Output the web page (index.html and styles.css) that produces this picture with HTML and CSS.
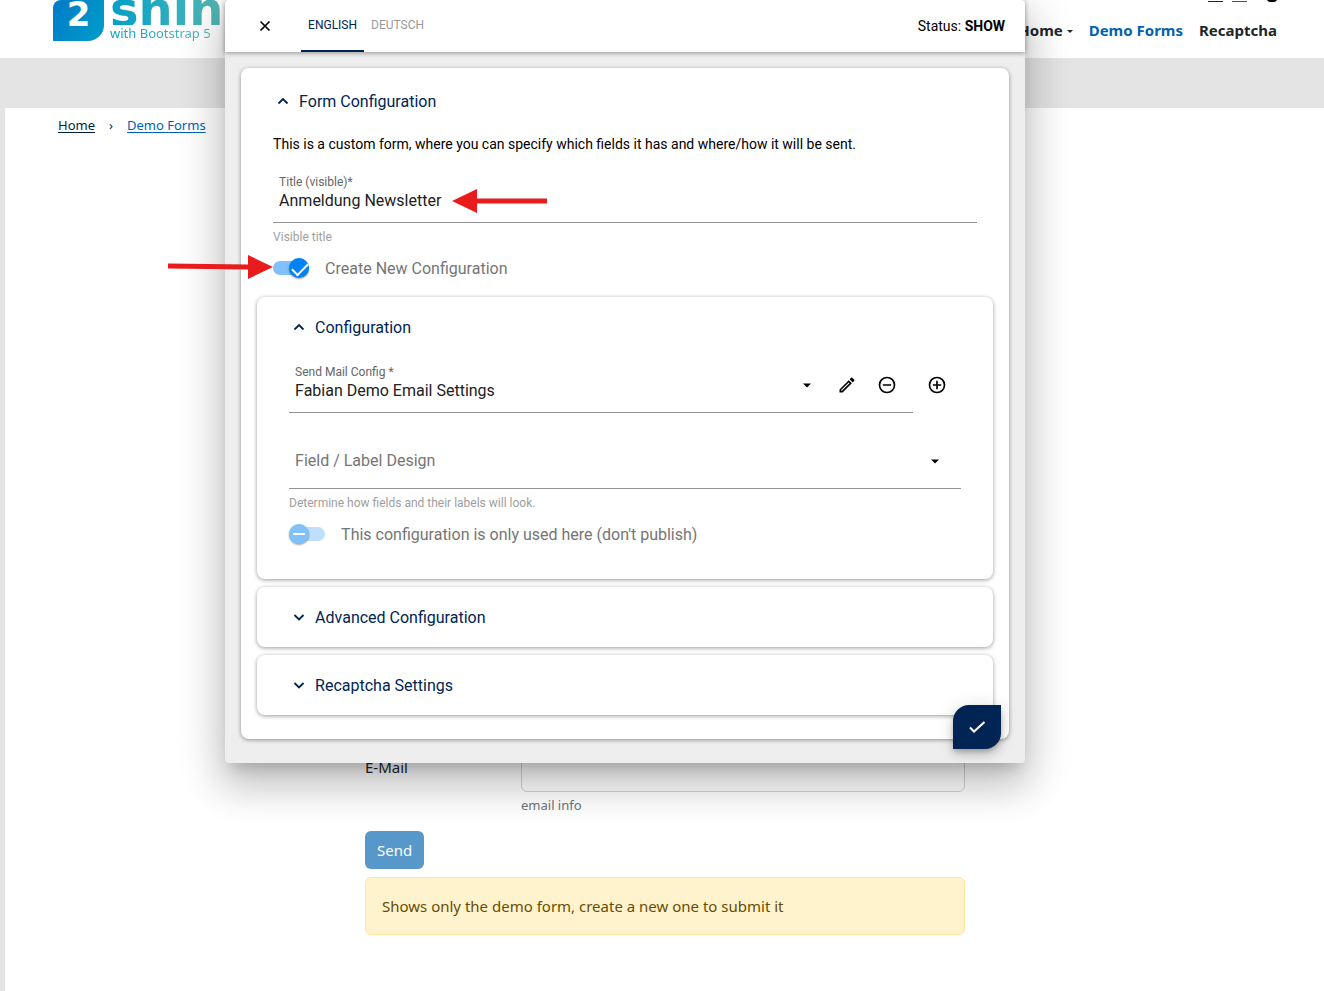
FILE: index.html
```html
<!DOCTYPE html>
<html lang="en">
<head>
<meta charset="utf-8">
<title>Demo Forms</title>
<link rel="stylesheet" href="styles.css">
</head>
<body>
<header class="site-header">
  <a class="logo" href="#">
    <span class="logo-mark">2</span>
    <span class="logo-words">
      <span class="logo-name">shin</span>
      <span class="logo-sub">with Bootstrap 5</span>
    </span>
  </a>
  <div class="header-right">
    <svg class="tools" width="70" height="3" viewBox="0 0 70 3" aria-hidden="true">
      <path d="M1 1.5h15" stroke="#212529"/>
      <path d="M25 1.5h15" stroke="#0d5fb0"/>
      <path d="M60 0h10q-1 2-3 2h-4q-2 0-3-2z" fill="#000"/>
    </svg>
    <nav class="main-nav">
      <a href="#">Home <i class="caret"></i></a>
      <a class="active" href="#">Demo Forms</a>
      <a href="#">Recaptcha</a>
    </nav>
  </div>
</header>
<div class="band"></div>
<main class="page">
  <nav class="breadcrumb">
    <a href="#">Home</a><span>›</span><a class="current" href="#">Demo Forms</a>
  </nav>
  <form class="demo-form">
    <div class="form-row">
      <label for="email">E-Mail</label>
      <div class="form-field">
        <input id="email" type="email">
        <small>email info</small>
      </div>
    </div>
    <button class="send" type="button">Send</button>
    <div class="alert">Shows only the demo form, create a new one to submit it</div>
  </form>
</main>

<section class="dialog" role="dialog" aria-label="Form Configuration">
  <header class="dialog-header">
    <button class="icon-btn close" type="button" aria-label="Close">
      <svg width="24" height="24" viewBox="0 0 24 24"><path d="M7.5 7.5l9 9M16.500 7.500l-9 9" stroke="#000" stroke-width="1.700" fill="none"/></svg>
    </button>
    <div class="tabs" role="tablist">
      <button class="tab selected" type="button" role="tab" aria-selected="true">ENGLISH</button>
      <button class="tab" type="button" role="tab" aria-selected="false">DEUTSCH</button>
    </div>
    <p class="status">Status: <b>SHOW</b></p>
  </header>
  <div class="dialog-body">
    <div class="card outer">
      <button class="card-title" type="button" aria-expanded="true">
        <svg width="20" height="20" viewBox="0 0 20 20"><path d="M5.500 12.500L10 8l4.500 4.500" stroke="currentColor" stroke-width="1.800" fill="none"/></svg>Form Configuration
      </button>
      <div class="outer-fields">
        <p class="intro">This is a custom form, where you can specify which fields it has and where/how it will be sent.</p>
        <div class="field">
          <label for="title">Title (visible)*</label>
          <input id="title" type="text" value="Anmeldung Newsletter">
        </div>
        <p class="hint">Visible title</p>
        <label class="toggle"><input type="checkbox" checked><span>Create New Configuration</span></label>
      </div>
      <div class="card inner">
        <button class="card-title" type="button" aria-expanded="true">
          <svg width="20" height="20" viewBox="0 0 20 20"><path d="M5.500 12.500L10 8l4.500 4.500" stroke="currentColor" stroke-width="1.800" fill="none"/></svg>Configuration
        </button>
        <div class="inner-fields">
          <div class="picker">
            <div class="field with-actions">
              <div class="field-text">
                <label for="mail">Send Mail Config *</label>
                <select id="mail"><option>Fabian Demo Email Settings</option></select>
              </div>
              <svg class="arrow" width="24" height="24" viewBox="0 0 24 24"><path d="M8 10.500h8l-4 4z"/></svg>
              <button class="icon-btn" type="button" aria-label="Edit">
                <svg width="20" height="20" viewBox="0 0 24 24"><path d="M14.060 9.020l.92.92L5.920 19H5v-.92l9.060-9.060M17.660 3c-.25 0-.51.1-.7.290l-1.830 1.830 3.750 3.750 1.830-1.830c.39-.39.39-1.020 0-1.410l-2.340-2.340c-.2-.2-.45-.29-.68-.29zm-3.600 3.190L3 17.250V21h3.750L17.810 9.940l-3.750-3.750z"/></svg>
              </button>
              <button class="icon-btn" type="button" aria-label="Remove">
                <svg width="20" height="20" viewBox="0 0 24 24"><path d="M7 11v2h10v-2H7zm5-9a10 10 0 100 20 10 10 0 000-20zm0 18a8 8 0 110-16 8 8 0 010 16z"/></svg>
              </button>
            </div>
            <button class="icon-btn add" type="button" aria-label="Add">
              <svg width="20" height="20" viewBox="0 0 24 24"><path d="M13 7h-2v4H7v2h4v4h2v-4h4v-2h-4V7zm-1-5a10 10 0 100 20 10 10 0 000-20zm0 18a8 8 0 110-16 8 8 0 010 16z"/></svg>
            </button>
          </div>
          <div class="field design">
            <select aria-label="Field / Label Design"><option>Field / Label Design</option></select>
            <svg class="arrow" width="24" height="24" viewBox="0 0 24 24"><path d="M8 10.500h8l-4 4z"/></svg>
          </div>
          <p class="hint">Determine how fields and their labels will look.</p>
          <label class="toggle"><input type="checkbox" class="unset"><span>This configuration is only used here (don't publish)</span></label>
        </div>
      </div>
      <div class="card inner">
        <button class="card-title" type="button" aria-expanded="false">
          <svg width="20" height="20" viewBox="0 0 20 20"><path d="M5.500 8l4.500 4.500L14.500 8" stroke="currentColor" stroke-width="1.800" fill="none"/></svg>Advanced Configuration
        </button>
      </div>
      <div class="card inner">
        <button class="card-title" type="button" aria-expanded="false">
          <svg width="20" height="20" viewBox="0 0 20 20"><path d="M5.500 8l4.500 4.500L14.500 8" stroke="currentColor" stroke-width="1.800" fill="none"/></svg>Recaptcha Settings
        </button>
      </div>
    </div>
  </div>
  <button class="save" type="button" aria-label="Save">
    <svg width="24" height="24" viewBox="0 0 24 24"><path d="M5 12.500l4 4L19.500 7" stroke="#fff" stroke-width="2" fill="none"/></svg>
  </button>
</section>

<svg class="pointer pointer-title" width="96" height="26" viewBox="0 0 96 26" aria-hidden="true"><path d="M0 13L25 1v9.500h70v5H25V25z"/></svg>
<svg class="pointer pointer-toggle" width="106" height="26" viewBox="0 0 106 26" aria-hidden="true"><path d="M0 9.500l80 1V1l25 12-25 12v-9.500l-80-1z"/></svg>
</body>
</html>
```

FILE: styles.css
```css
* { box-sizing: border-box; }

body {
  margin: 0;
  min-height: 100vh;
  display: flex;
  flex-direction: column;
  background: #e4e4e4;
  color: #212529;
  font-family: "Noto Sans", "Open Sans", sans-serif;
  font-size: 15px;
}

p { margin: 0; }
button, input, select { font: inherit; color: inherit; }
button { border: 0; background: none; padding: 0; cursor: pointer; }

/* Site header */
.site-header {
  height: 58px;
  padding: 0 47px 0 53px;
  display: flex;
  justify-content: space-between;
  background: #fff;
  overflow: hidden;
}
.logo { display: flex; gap: 6px; height: 41px; text-decoration: none; }
.logo-mark {
  width: 51px;
  height: 41px;
  border-radius: 8px 0 16px 0;
  background: linear-gradient(120deg, #0079c8, #009fc9);
  color: #fff;
  font: bold 34px/28px "DejaVu Sans", sans-serif;
  text-align: center;
}
.logo-words { display: flex; flex-direction: column; }
.logo-name, .logo-sub {
  color: transparent;
  background: linear-gradient(90deg, #009fc9, #56b8b4);
  background-clip: text;
}
.logo-name { height: 28px; font: bold 48px/18px "DejaVu Sans", sans-serif; }
.logo-sub { align-self: flex-start; font-size: 13px; line-height: 16px; }

.header-right { display: flex; flex-direction: column; align-items: flex-end; gap: 15px; }
.main-nav { display: flex; gap: 16px; font-weight: 700; line-height: 24px; }
.main-nav a { color: #212529; text-decoration: none; }
.main-nav .active { color: #0062b1; }
.caret {
  display: inline-block;
  vertical-align: middle;
  border: 3px solid transparent;
  border-top-color: currentColor;
  border-bottom: 0;
}

.band { height: 50px; }

/* Page content */
.page { flex: 1; margin-left: 5px; padding: 5px 0 56px 53px; background: #fff; }
.breadcrumb { display: flex; gap: 14px; font-size: 13px; line-height: 24px; }
.breadcrumb a { color: #001f3f; text-underline-offset: 2px; }
.breadcrumb .current { color: #0062b1; }

.demo-form { width: 600px; margin: 617px 0 0 307px; }
.form-row { display: grid; grid-template-columns: 156px 1fr; line-height: 26px; }
.form-field { display: flex; flex-direction: column; }
.form-field input { height: 38px; border: 1px solid #ced4da; border-radius: 6px; background: #fff; }
.form-field small { font-size: 13px; color: #6c757d; }
.send {
  display: block;
  height: 38px;
  margin: 13px 0 8px;
  padding: 0 12px;
  border-radius: 6px;
  background: #5897c9;
  color: #fff;
}
.alert {
  padding: 16px;
  border: 1px solid #ffe69c;
  border-radius: 6px;
  background: #fff3cd;
  color: #664d03;
  line-height: 24px;
}

/* Dialog */
.dialog {
  position: absolute;
  top: 0;
  left: 17%;
  width: 800px;
  border-radius: 4px;
  background: #eee;
  color: #000;
  font-family: Roboto, sans-serif;
  font-size: 14px;
  box-shadow: 0 11px 15px -7px #0003, 0 24px 38px 3px #00000024, 0 9px 46px 8px #0000001f;
}
.dialog-header {
  height: 52px;
  padding: 0 20px 0 28px;
  display: flex;
  align-items: center;
  border-radius: 4px 4px 0 0;
  background: #fff;
  box-shadow: 0 1px 5px #0006;
}
.icon-btn { display: flex; align-items: center; justify-content: center; }
.tabs { display: flex; align-self: stretch; margin-left: 24px; font-size: 12px; }
.tab { padding: 0 7px; color: #999; border-bottom: 2px solid transparent; }
.tab.selected { color: #002554; border-color: #002554; }
.status { margin-left: auto; }

.dialog-body { padding: 16px 16px 24px; }
.card { border-radius: 8px; background: #fff; box-shadow: 0 1px 4px #0006; }
.outer { padding: 4px 16px 24px; }
.card-title {
  width: 100%;
  height: 60px;
  padding-left: 32px;
  display: flex;
  align-items: center;
  gap: 6px;
  color: #002554;
  font-size: 16px;
}
.outer > .card-title { height: 58px; padding-left: 16px; }
.inner + .inner { margin-top: 8px; }
.outer-fields { padding: 0 16px 13px; }
.intro { padding: 4px 0 20px; line-height: 20px; }

.field { border-bottom: 1px solid #949494; font-size: 16px; }
.field label { display: block; padding-left: 6px; font-size: 12px; line-height: 16px; color: #666; }
.field input, .field select {
  display: block;
  width: 100%;
  height: 20px;
  padding: 0 6px;
  border: 0;
  outline: 0;
  appearance: none;
  background: none;
  color: #212121;
}
.outer-fields .field { padding-bottom: 12px; }
.hint { padding-top: 4px; font-size: 12px; line-height: 20px; color: #9e9e9e; }

.inner-fields { padding: 3px 32px 29px; }
.picker { display: flex; justify-content: space-between; }
.with-actions { flex: 0 0 624px; display: flex; height: 53px; }
.field-text { flex: 1; padding-top: 4px; }
.arrow { flex: none; }
.with-actions .arrow { margin: 13px 8px 0 0; }
.with-actions .icon-btn { width: 40px; height: 40px; margin-top: 5px; }
.with-actions .icon-btn:last-child { margin-right: 6px; }
.add { width: 48px; height: 40px; margin-top: 5px; }
.design { display: flex; align-items: center; height: 56px; margin-top: 20px; padding-right: 14px; }
.design select { color: #757575; }

/* Toggles */
.toggle { display: flex; align-items: center; gap: 16px; height: 32px; margin-top: 5px; color: #757575; font-size: 16px; }
.toggle input {
  position: relative;
  width: 36px;
  height: 14px;
  margin: 0;
  appearance: none;
  border-radius: 7px;
  background: #bfe0fd;
}
.toggle input::before {
  content: "";
  position: absolute;
  top: -3px;
  left: 0;
  width: 20px;
  height: 20px;
  border-radius: 50%;
  background: #80c1fb;
  box-shadow: 0 1px 2px #0006;
}
.toggle input::after {
  content: "";
  position: absolute;
  top: 6px;
  left: 4px;
  width: 12px;
  height: 2px;
  background: #fff;
}
.toggle input:checked { background: #80c1fb; }
.toggle input:checked::before { left: 16px; background: #0084f5; }
.toggle input:checked::after {
  top: 2px;
  left: 19px;
  width: 14px;
  height: 7px;
  border: solid #fff;
  border-width: 0 0 2px 2px;
  background: none;
  transform: rotate(-45deg);
}

.save {
  position: absolute;
  right: 24px;
  bottom: 14px;
  width: 48px;
  height: 44px;
  display: flex;
  align-items: center;
  justify-content: center;
  border-radius: 16px 0 16px 0;
  background: #002554;
  box-shadow: 0 3px 5px -1px #0003, 0 6px 10px #00000024, 0 1px 18px #0000001f;
}

/* Callout arrows drawn over the dialog */
.pointer { position: absolute; fill: #e81c1c; }
.pointer-title { left: 452px; top: 188px; }
.pointer-toggle { left: 168px; top: 254px; }
```
